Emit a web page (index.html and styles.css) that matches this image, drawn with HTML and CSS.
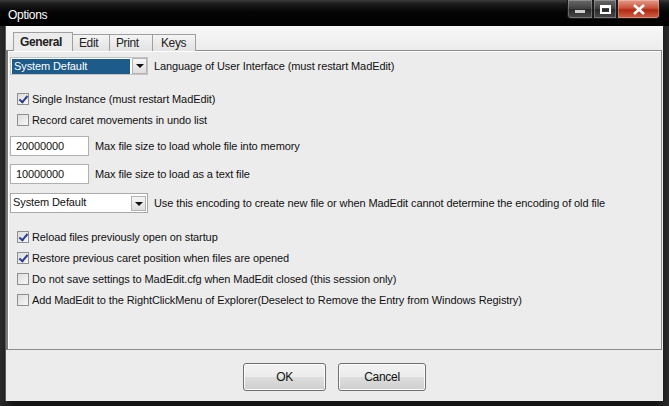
FILE: index.html
```html
<!DOCTYPE html>
<html lang="en">

<head>
    <meta charset="UTF-8">
    <title>Options</title>
    <link rel="stylesheet" href="styles.css">
</head>

<body>
    <div class="window">
        <div class="titlebar">
            <span class="title">Options</span>
            <div class="caption">
                <span class="cap cap-min"><i></i></span>
                <span class="cap cap-max"><i></i></span>
                <span class="cap cap-close">
                    <svg width="14" height="11" viewBox="0 0 14 11">
                        <path d="M2 1 L12 10 M12 1 L2 10" stroke="#fff" stroke-width="2.6" fill="none" />
                    </svg>
                </span>
            </div>
        </div>

        <div class="client">
            <div class="tabs">
                <div class="tab active">General</div>
                <div class="tab">Edit</div>
                <div class="tab">Print</div>
                <div class="tab">Keys</div>
            </div>

            <div class="panel">
                <div class="row row-lang">
                    <div class="combo combo-short">
                        <span class="combo-value selected">System Default</span>
                        <span class="combo-btn"></span>
                    </div>
                    <span class="label">Language of User Interface (must restart MadEdit)</span>
                </div>

                <div class="checks checks-top">
                    <label class="check"><span class="box checked"></span>Single Instance (must restart MadEdit)</label>
                    <label class="check"><span class="box"></span>Record caret movements in undo list</label>
                </div>

                <div class="row row-size1">
                    <span class="textbox">20000000</span>
                    <span class="label">Max file size to load whole file into memory</span>
                </div>
                <div class="row row-size2">
                    <span class="textbox">10000000</span>
                    <span class="label">Max file size to load as a text file</span>
                </div>

                <div class="row row-enc">
                    <div class="combo combo-long">
                        <span class="combo-value">System Default</span>
                        <span class="combo-btn"></span>
                    </div>
                    <span class="label">Use this encoding to create new file or when MadEdit cannot determine the encoding of old file</span>
                </div>

                <div class="checks checks-bottom">
                    <label class="check"><span class="box checked"></span>Reload files previously open on startup</label>
                    <label class="check"><span class="box checked"></span>Restore previous caret position when files are opened</label>
                    <label class="check"><span class="box"></span>Do not save settings to MadEdit.cfg when MadEdit closed (this session only)</label>
                    <label class="check check-last"><span class="box"></span>Add MadEdit to the RightClickMenu of Explorer(Deselect to Remove the Entry from Windows Registry)</label>
                </div>
            </div>

            <div class="buttons">
                <button class="btn btn-ok">OK</button>
                <button class="btn btn-cancel">Cancel</button>
            </div>
        </div>
    </div>
</body>

</html>
```

FILE: styles.css
```css
* {
    margin: 0;
    padding: 0;
    box-sizing: border-box;
}

body {
    width: 669px;
    height: 406px;
    overflow: hidden;
    background: #000;
    font-family: 'Liberation Sans', Arial, sans-serif;
    font-size: 11px;
    letter-spacing: -0.1px;
    color: #111;
}

.window {
    width: 669px;
    height: 406px;
    display: flex;
    flex-direction: column;
    padding: 0 6px 5px 5px;
    background: linear-gradient(90deg, #2a2a2a, #151515 2%, #151515 98%, #2a2a2a);
}

/* title bar */
.titlebar {
    height: 26px;
    display: flex;
    align-items: flex-start;
    margin: 0 -6px 0 -5px;
    padding-left: 8px;
    background: linear-gradient(180deg, #3a3a3a 0, #1a1a1a 4px, #050505 12px, #000 26px);
}

.title {
    color: #fff;
    font-size: 12px;
    letter-spacing: -0.3px;
    line-height: 30px;
}

.caption {
    margin-left: auto;
    margin-right: 9px;
    display: flex;
    height: 19px;
}

.cap {
    display: flex;
    align-items: center;
    justify-content: center;
    border: 1px solid #1a1a1a;
    border-top: none;
    box-shadow: inset 0 0 0 1px rgba(255, 255, 255, 0.25);
}

.cap-min {
    width: 26px;
    border-bottom-left-radius: 4px;
    background: linear-gradient(180deg, #6a6a6a, #3e3e3e 50%, #2a2a2a 51%, #4a4a4a);
}

.cap-min i {
    display: block;
    width: 10px;
    height: 3px;
    margin-top: 4px;
    background: #cfcfcf;
}

.cap-max {
    width: 24px;
    background: linear-gradient(180deg, #6a6a6a, #3e3e3e 50%, #2a2a2a 51%, #4a4a4a);
}

.cap-max i {
    display: block;
    width: 11px;
    height: 9px;
    border: 2px solid #fff;
    border-top-width: 3px;
}

.cap-close {
    width: 43px;
    border-bottom-right-radius: 4px;
    background: linear-gradient(180deg, #e49a88, #c9543b 45%, #b02a10 55%, #d0624a);
}

/* client area */
.client {
    flex: 1;
    display: flex;
    flex-direction: column;
    background: linear-gradient(180deg, #f7f7f7 0, #ececec 24px, #ececec);
    border-left: 1px solid #5a5a5a;
}

.tabs {
    display: flex;
    align-items: flex-end;
    height: 25px;
    padding-left: 7px;
    margin-bottom: -1px;
    position: relative;
    z-index: 1;
}

.tab {
    height: 17px;
    padding: 0 6px;
    border: 1px solid #a0a0a0;
    border-bottom: none;
    border-left: none;
    font-size: 12px;
    letter-spacing: -0.4px;
    line-height: 17px;
    color: #222;
    background: linear-gradient(180deg, #f4f4f4, #e2e2e2);
}

.tab.active {
    height: 19px;
    width: 60px;
    border-left: 1px solid #a0a0a0;
    padding: 0 0 0 6px;
    font-weight: bold;
    line-height: 19px;
    background: #ececec;
    font-size: 12px;
}

.tabs .tab:nth-child(2) {
    width: 37px;
}

.tabs .tab:nth-child(3) {
    width: 43px;
}

.tabs .tab:nth-child(4) {
    width: 43px;
    padding-left: 8px;
}

.panel {
    height: 300px;
    margin-right: 1px;
    border: 1px solid #8c8c8c;
    border-left: 2px solid #7a7a7a;
    box-shadow: inset 1px 1px 0 #fff;
    display: flex;
    flex-direction: column;
    padding-left: 2px;
}

.row {
    display: flex;
    align-items: center;
}

.label {
    white-space: nowrap;
}

.row-lang {
    margin-top: 6px;
    height: 18px;
}

.combo {
    display: flex;
    align-items: center;
    height: 100%;
    background: #fff;
    border: 1px solid #c3c3c3;
    margin-right: 6px;
}

.combo-short {
    width: 138px;
    padding-left: 1px;
}

.combo-long {
    width: 138px;
    border-color: #a9a9a9;
}

.combo-value {
    flex: 1;
    height: 100%;
    padding-left: 2px;
    line-height: 17px;
    white-space: nowrap;
}

.combo-value.selected {
    height: 15px;
    line-height: 15px;
    margin-right: 2px;
    background: #1d5b8b;
    color: #fff;
}

.combo-btn {
    width: 15px;
    height: 16px;
    margin-right: 0;
    border: 1px solid #b4b4b4;
    background: linear-gradient(180deg, #f6f6f6, #dedede);
    position: relative;
}

.combo-long .combo-btn {
    margin-right: 1px;
    height: 15px;
}

.combo-btn::after {
    content: '';
    position: absolute;
    left: 3px;
    top: 5px;
    border-left: 4px solid transparent;
    border-right: 4px solid transparent;
    border-top: 4px solid #111;
}

.checks {
    display: flex;
    flex-direction: column;
    padding-left: 7px;
}

.checks-top {
    margin-top: 14px;
}

.checks-top .check + .check {
    margin-top: 1px;
}

.checks-bottom {
    margin-top: 14px;
}

.check {
    height: 20px;
    display: flex;
    align-items: center;
    white-space: nowrap;
}

.checks-bottom .check + .check {
    margin-top: 1px;
}

.checks-bottom .check-last {
    margin-top: 2px;
}

.box {
    width: 12px;
    height: 12px;
    margin-right: 3px;
    border: 1px solid #8e8f8f;
    background: linear-gradient(135deg, #dcdcdc, #f8f8f8);
    position: relative;
}

.box.checked::after {
    content: '';
    position: absolute;
    left: 3px;
    top: 0;
    width: 3px;
    height: 7px;
    border: solid #2a3f8f;
    border-width: 0 2px 2px 0;
    transform: rotate(40deg);
}

.textbox {
    width: 79px;
    height: 20px;
    padding-left: 5px;
    line-height: 19px;
    background: #fff;
    border: 1px solid #b0b0b0;
    margin-right: 6px;
}

.row-size1 {
    margin-top: 6px;
}

.row-size2 {
    margin-top: 8px;
}

.row-enc {
    margin-top: 9px;
    height: 20px;
}

/* bottom buttons */
.buttons {
    flex: 1;
    display: flex;
    justify-content: center;
    align-items: flex-start;
    gap: 12px;
    padding-top: 13px;
}

.btn {
    height: 28px;
    border: 1px solid #707070;
    border-radius: 3px;
    background: linear-gradient(180deg, #f3f3f3 0, #ebebeb 50%, #dddddd 51%, #cfcfcf);
    box-shadow: inset 0 0 0 1px #fbfbfb;
    font-family: 'Liberation Sans', Arial, sans-serif;
    font-size: 12px;
    letter-spacing: -0.3px;
    color: #111;
}

.btn-ok {
    width: 83px;
}

.btn-cancel {
    width: 88px;
}
```
